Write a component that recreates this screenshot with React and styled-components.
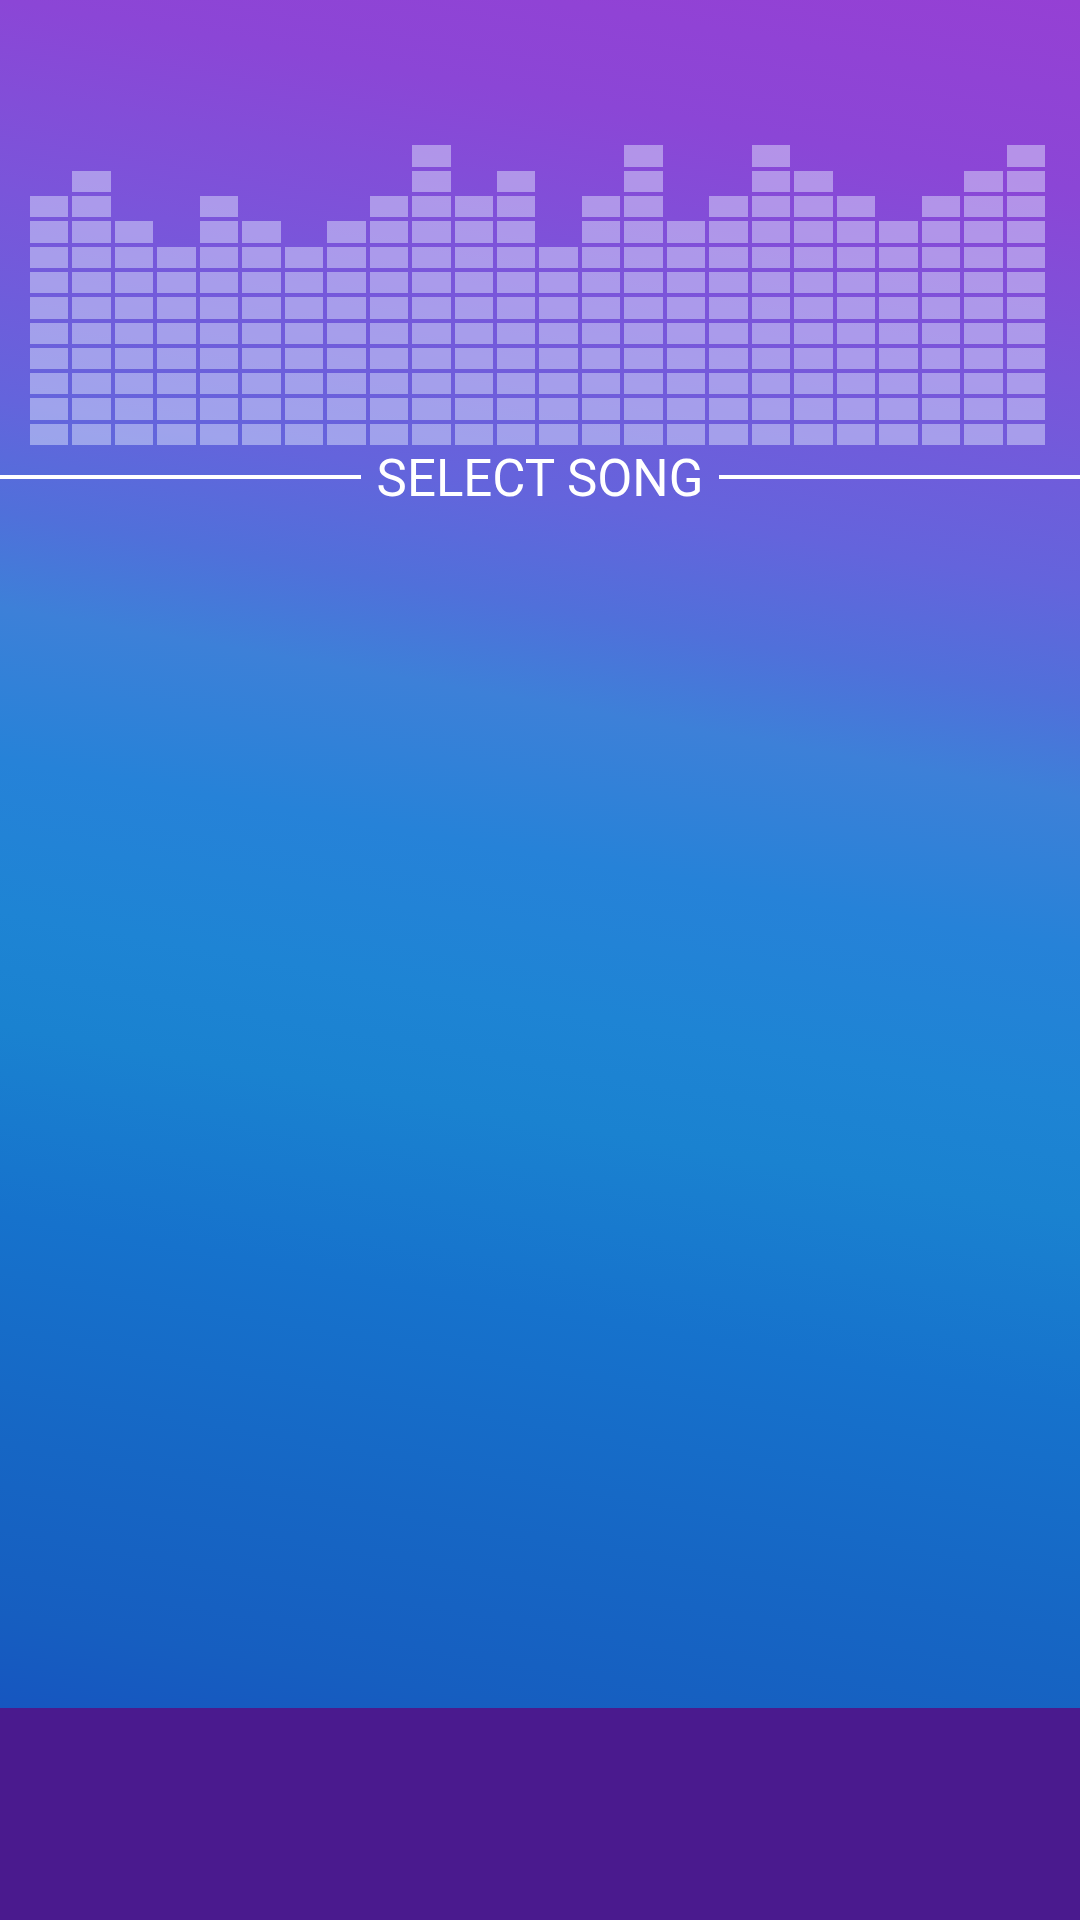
import React from 'react'
import styled, { createGlobalStyle } from 'styled-components'

const GlobalStyle = createGlobalStyle`
  html, body {
    margin: 0;
    padding: 0;
    height: 100%;
  }
  body {
    font-family: Roboto, "Noto Sans", sans-serif;
    background: #4a1a8e;
  }
  #root {
    height: 100%;
  }
`

const Screen = styled.div`
  width: 1080px;
  height: 1920px;
  display: flex;
  flex-direction: column;
  overflow: hidden;
`

const Stage = styled.main`
  flex: 0 0 1708px;
  display: flex;
  flex-direction: column;
  padding-top: 144px;
  box-sizing: border-box;
  background: linear-gradient(
    190deg,
    #9540d4 0%,
    #8b46d6 10%,
    #7a55da 20%,
    #6464dc 31%,
    #5070da 37%,
    #3d80d8 42%,
    #2682d8 50%,
    #1e84d4 58%,
    #1a82d0 64%,
    #1672cc 74%,
    #1666c4 86%,
    #165ec0 95%,
    #1656c0 100%
  );
`

const Equalizer = styled.div`
  display: grid;
  grid-template-columns: repeat(24, 1fr);
  column-gap: 4px;
  padding: 0 35px 0 30px;
  height: 301px;
  align-items: end;
`

const Bar = styled.div`
  display: flex;
  flex-direction: column-reverse;
  gap: 4px;
`

const Cell = styled.span`
  display: block;
  height: 21.3px;
  background: rgba(230, 240, 255, 0.45);
`

const Heading = styled.div`
  display: flex;
  align-items: center;
  gap: 16px;
  margin-top: 5px;
`

const Rule = styled.span`
  flex: 1;
  height: 4px;
  background: #ffffff;
  margin-top: -4px;
`

const Title = styled.h1`
  margin: 0;
  font-family: Roboto, "Noto Sans", sans-serif;
  font-weight: 400;
  font-size: 51px;
  line-height: 58px;
  color: #ffffff;
  letter-spacing: 0;
`

const BottomBar = styled.footer`
  flex: 1;
  background: #4a1a8e;
`

const levels = [10, 11, 9, 8, 10, 9, 8, 9, 10, 12, 10, 11, 8, 10, 12, 9, 10, 12, 11, 10, 9, 10, 11, 12]

const App = () => {
  return (
    <>
      <GlobalStyle />
      <Screen>
        <Stage>
          <Equalizer>
            {levels.map((n, i) => (
              <Bar key={i}>
                {Array.from({ length: n }).map((_, j) => (
                  <Cell key={j} />
                ))}
              </Bar>
            ))}
          </Equalizer>
          <Heading>
            <Rule />
            <Title>SELECT SONG</Title>
            <Rule />
          </Heading>
        </Stage>
        <BottomBar />
      </Screen>
    </>
  )
}

export default App
